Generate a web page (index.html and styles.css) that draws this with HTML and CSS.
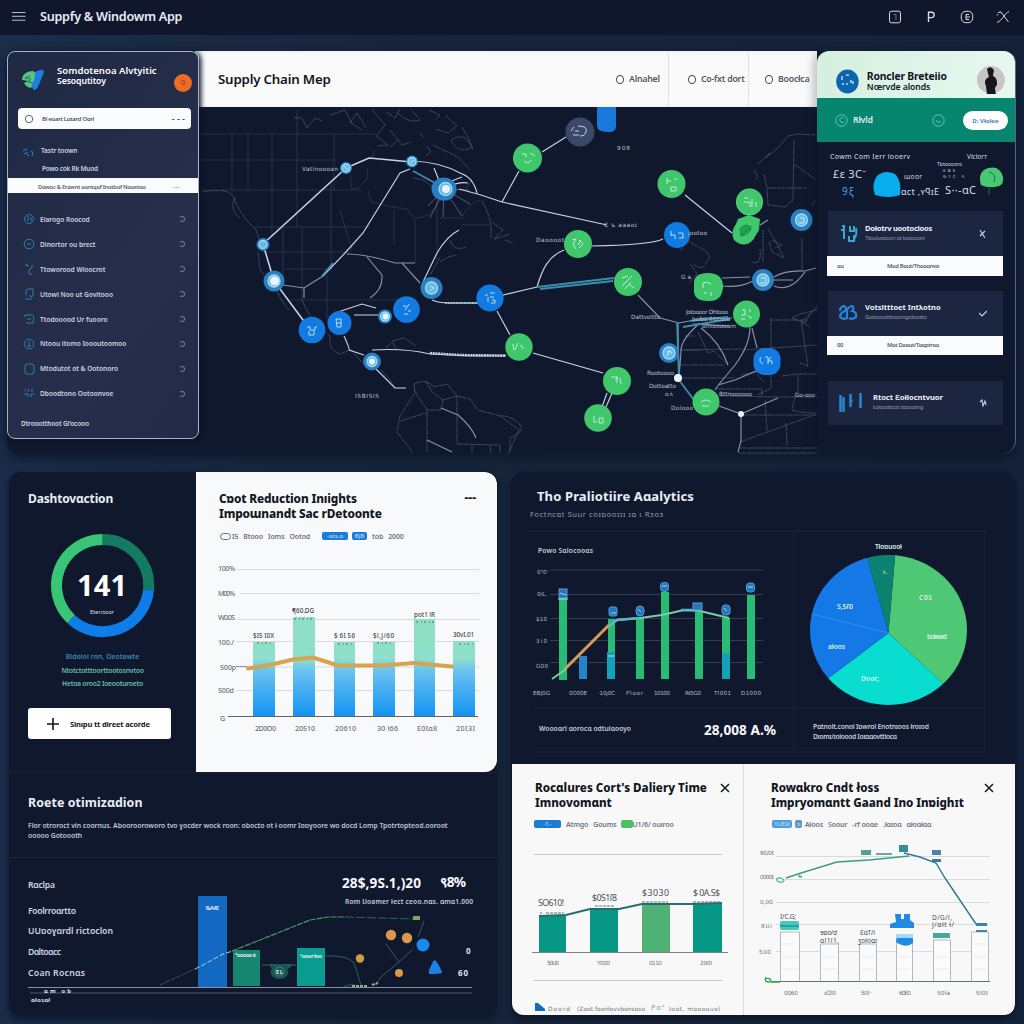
FILE: index.html
```html
<!DOCTYPE html>
<html lang="en">
<head>
<meta charset="utf-8">
<title>Supply &amp; Windowm App</title>
<link rel="stylesheet" href="styles.css">
</head>
<body>
<header class="topbar">
  <svg class="burger" viewBox="0 0 14 9"><path d="M0 .5H13.5M0 4.3H13.5M0 8.2H13.5"/></svg>
  <h1>Suppfy &amp; Windowm App</h1>
  <nav class="tools">
    <svg viewBox="0 0 14 14"><rect x="1.5" y="1.2" width="11" height="11.6" rx="2"/><path d="M5.500 4.500H8V10" opacity=".45"/></svg>
    <svg viewBox="0 0 14 14"><path d="M4.500 12V2.300H7.600C11 2.300 11 7.600 7.600 7.600H4.500" stroke-width="1.400"/></svg>
    <svg viewBox="0 0 14 14"><rect x="1.300" y="1.300" width="11.400" height="11.400" rx="4.500"/><path d="M9 4.500H6V9.500H9M6 7H10"/></svg>
    <svg viewBox="0 0 14 14"><path d="M2 2.500L5 2L12.500 12M13 1.500C9 3 6 11 1 12.500M1 5.500L2 4"/></svg>
  </nav>
</header>

<main class="board">
<section class="overview">
  <aside class="sidebar">
    <div class="brand">
      <svg class="logo" viewBox="0 0 23 22"><path d="M11 2C4 2 0 6 0 11L6 12L2 14C5 20 11 20 12 15L14 4Z" fill="#52c483"/><path d="M8 7L3 9L9 10L6 13L12 14" fill="none" stroke="#2d6f6c"/><path d="M14 2.500Q22-1 22 3L16 18Q12 24 10 18Q9 14 12 12Z" fill="#1e7fe0"/></svg>
      <p class="brand-name"><b>Somdotenoa Alvtyitic</b><b class="second">Sesoqutitoy</b></p>
      <span class="alert">o</span>
    </div>
    <div class="search"><svg viewBox="0 0 10 10"><circle cx="5" cy="5" r="3.700"/></svg><span>Bl eoart Lotard Oori</span><i>- - -</i></div>
    <div class="lead"><svg viewBox="0 0 12 10"><path d="M1 4L5 2M2 7L6 5M5 8H7M9 4Q12 5 10 9"/></svg><span>Tastr toown</span></div>
    <div class="lead sub"><span>Powo cok  Rk Muod</span></div>
    <div class="current"><span>Dowoc &amp; Erownt aontqof Inotbof Nooetoo</span><i>·-·</i></div>
    <ul class="menu">
      <li><svg viewBox="0 0 12 12"><circle cx="6" cy="6" r="4.500"/><path d="M5 3V8M8 4V8"/></svg><span>Elarogo Roocod</span><i></i></li>
      <li><svg viewBox="0 0 12 12"><circle cx="6" cy="6" r="4.800"/><path d="M4 6H8"/></svg><span>Dinortor ou brect</span><i></i></li>
      <li><svg viewBox="0 0 12 12"><path d="M2 2H5V4M9 2V5L6 7V11H9"/></svg><span>Ttoworood Wloocrot</span><i></i></li>
      <li><svg viewBox="0 0 12 12"><path d="M3 7V3Q3 1 6 1H10V8Q8 10 6 7M2 11H9"/></svg><span>Utowl Noo ut Govitooo</span><i></i></li>
      <li><svg viewBox="0 0 12 12"><path d="M2 4V2H9Q12 3 10 10H3M4 6H8"/></svg><span>Ttodooood Ur fuooro</span><i></i></li>
      <li><svg viewBox="0 0 12 12"><circle cx="6" cy="6" r="4.800"/><path d="M6 3V8M4 8H8"/></svg><span>Ntoou itomo Ioooutoomoo</span><i></i></li>
      <li><svg viewBox="0 0 12 12"><rect x="2" y="1" width="9" height="10" rx="2"/></svg><span>Mtodutot ot &amp; Ootonoro</span><i></i></li>
      <li><svg viewBox="0 0 12 12"><path d="M2 1V3M6 1L5 4M9 1V4M1 6H5V9M8 9V6H11"/></svg><span>Dboodtono Ootoonvoe</span><i></i></li>
    </ul>
    <p class="foot">Dtroootthoot Gl'ocooo</p>
  </aside>

  <section class="mapcard">
    <div class="maphead">
      <h2>Supply Chain Mep</h2>
      <span class="tab"><i></i>Alnahel</span>
      <span class="tab"><i></i>Co-fxt dort</span>
      <span class="tab"><i></i>Boocłca</span>
    </div>
    <svg class="map" viewBox="199 107 618 347">
      <g class="grid">
        <path d="M200 134H376M200 160H335M200 190H362M232 134V190M248 134V190M272 134V236M297 110V227M334 134V190M254 227H370M262 252H350M283 227V285M302 227V300M331 180V270M285 269H330M290 300H405M327 275V320M350 175L352 189 358 188 367 179 368 168M368 190L371 202 387 206M387 206L407 209 415 220V263M394 210V245M437 190V260M415 218Q432 218 440 200M375 150L371 160M340 210L352 250M440 218H462Q466 205 480 200M462 225H490"/>
      </g>
      <g class="coast">
        <path d="M202 192Q230 187 234 198Q240 215 256 230L261 245M235 197Q229 210 240 218M258 252L260 270 268 279M277 290Q280 300 289 310M302 300Q310 320 330 336Q328 350 340 354Q350 350 352 350"/>
        <path d="M294 118H302L307 128 315 118 322 121M330 115L345 110 352 123M362 130L350 122 357 113 366 128M372 109L385 125 376 136 388 145 378 146M386 112L395 118 400 109M397 112Q408 124 420 120M412 111L420 119M390 130L402 145 411 142M390 147L398 140M429 110L440 115 435 120M445 115L457 126 448 133 436 129M420 133L423 137M433 145L458 157 470 170M451 141Q463 130 472 147Q460 155 451 141M427 146L431 152 426 156M462 127Q470 140 473 150M460 173L472 180 466 188M413 178L423 180 432 186"/>
        <path d="M482 201Q493 220 491 238M450 240Q453 252 466 247M492 222L503 230 494 239 510 234M505 240L513 243M440 262L448 257 456 255M430 275L440 258M396 349L392 341 404 338 416 346M391 343L386 348M352 350Q360 362 366 365M381 370Q392 380 394 388"/>
        <path d="M414 384Q425 378 434 387L447 384 457 396 470 399 478 410 500 416 519 430 508 454M414 384L415 393 400 416 397 432 413 453M427 410V452M414 390L427 410L441 410 443 400 432 392 426 381M443 400L457 396V444L500 445V453M400 421L426 413M472 444V453M490 445L491 453"/>
        <path d="M500 416Q512 415 520 425Q525 432 510 438V452"/>
        <path d="M758 164L770 153 765 158 778 148 788 136 798 134 815 135M754 170L758 177 755 180M764 174L767 188 768 205 785 207 793 200 794 140M794 164L816 180M768 188L807 188M763 230V262M752 262Q762 266 760 249M768 228L778 246 784 258 772 252 769 241M772 240L782 245 775 248M681 251L686 240 697 246 707 252 710 258 702 268 693 265M690 264L697 274 689 283M815 201L812 205M819 307L811 313 805 323 792 318 800 314 817 310"/>
        <path d="M802 238V270M801 320L808 366 800 363M771 318V388L758 395M742 350L818 345M680 350L742 349M681 365H725M682 378H735M720 396L778 397H820M765 400L767 431M786 423L787 445M796 392L792 410Q800 413 817 413M741 415H816M740 442L817 414M740 448H817M738 453H817M717 389H762V397M782 376L797 374H817M741 375L755 372 764 382M698 332L708 353 714 351 728 365M798 375V392M810 327L802 322 818 305M808 320H771M685 336L695 336M685 350H700"/>
      </g>
      <g class="routes">
        <path d="M346 168L369 158 412 162M346 168L263 244M263 244L274 281 306 324" stroke-width="1.600"/>
        <path d="M412 161Q440 162 460 173Q473 177 477 193M410 169L400 173 363 233 345 253 323 276M434 168L440 183M445 188Q460 181 468 183M444 184L462 177M459 189Q480 194 502 202L607 225M502 202L519 171M542 152L566 137M592 246Q650 245 663 239M564 250C548 256 542 270 537 287M490 298L537 287M497 311L510 335M533 353L603 373M685 195L732 233M459 230Q447 236 437 253L423 282M432 300Q438 303 450 303H478M354 315H380M338 312L362 304 376 308M372 350Q405 348 430 354L470 356H506M344 336Q350 349 349 350L364 355M376 369L395 388 406 388M607 393L602 407M612 393L606 407"/>
        <path d="M638 295L660 318 679 323 705 318H732M722 278L750 277M721 286Q740 288 753 281M774 277Q785 270 805 271L816 268M774 280H793M774 286Q790 293 805 272M750 327Q750 345 735 365L720 383 715 390M752 328L757 348M719 406L741 414V441L738 452M741 414L778 398M678 323L679 375M693 324L730 326M700 323Q680 340 681 352L679 378M701 328Q720 342 728 365M283 285L304 288 323 276 327 270M347 254Q365 254 395 263L402 263 420 283M402 263L415 263M367 257L382 275Q383 290 370 298M304 288L304 298M768 220L760 225M770 365L735 380 718 385M441 408L458 415Q472 427 476 438M427 440L452 452" opacity=".65"/>
        <path class="glow" d="M537 287L614 278M540 289L613 281M413 171L437 184M322 276L333 263M677 322L679 378M679 380L694 400M683 327L730 319M690 321L728 317"/>
        <path class="beads" d="M430 353L460 355 506 355.500"/><path class="beads thin" d="M445 303H478"/>
        <g stroke-width=".6" opacity=".6"><path d="M444 189L430 218M444 189L443 217M444 189L462 216M444 189L470 204M444 189L428 206M444 189L469 190"/></g>
      </g>
      <g class="nodes">
        <path d="M597 107H616V126Q616 132 609 132Q597 132 597 126Z" fill="#1878db"/>
        <g class="green"><circle cx="527.500" cy="158" r="14.500"/><circle cx="519" cy="347" r="13.700"/><circle cx="578" cy="244" r="14"/><circle cx="628" cy="282" r="14"/><circle cx="617" cy="381" r="14"/><circle cx="598" cy="418" r="13.800"/><circle cx="671.500" cy="184" r="14"/><circle cx="749.500" cy="202" r="13.500"/><path d="M738 219L749 215 760 219 759 230 753 240Q744 249 734 240Q730 232 736 224Z"/><path d="M694 283Q694 273 708 273Q723 273 723 287Q722 302 708 301Q695 301 694 292Z"/><circle cx="746.500" cy="314" r="13.500"/><circle cx="706" cy="402" r="13.500"/></g>
        <g class="blue"><circle cx="312" cy="330" r="13.300"/><circle cx="339.500" cy="323" r="12"/><circle cx="406.500" cy="309.500" r="13.300"/><circle cx="490" cy="298" r="13.600"/><circle cx="677" cy="235" r="13"/><rect x="753.500" y="348" width="27" height="27" rx="11"/></g>
        <circle cx="580" cy="132" r="14.500" fill="#3c4869"/>
        <g class="halo"><circle cx="346" cy="168" r="6"/><circle cx="412" cy="161.500" r="6"/><ellipse cx="444" cy="189" rx="12.500" ry="11.500"/><circle cx="263" cy="244.500" r="6.500"/><circle cx="274" cy="281" r="10.500"/><circle cx="385" cy="316.500" r="7"/><circle cx="431.500" cy="288" r="11"/><circle cx="372" cy="361.500" r="9"/><circle cx="801.500" cy="220" r="11"/><circle cx="763" cy="280" r="11"/><circle cx="669" cy="353" r="10"/></g>
        <g class="ring"><circle cx="346" cy="168" r="4"/><circle cx="412" cy="161.500" r="4"/><circle cx="445.500" cy="189" r="6.500"/><circle cx="263" cy="244.500" r="4"/><circle cx="274" cy="281" r="6"/><circle cx="385" cy="316.500" r="4.500"/><circle cx="431.500" cy="288" r="6"/><circle cx="372" cy="361.500" r="5"/><circle cx="801.500" cy="220" r="6"/><circle cx="763" cy="280" r="6"/><circle cx="669" cy="353" r="6"/></g>
        <g fill="#e9f6ff"><circle cx="446" cy="189" r="4"/><circle cx="274.500" cy="281" r="4.500"/><circle cx="372" cy="361.500" r="3"/><circle cx="385.500" cy="316.500" r="3"/><circle cx="678" cy="378" r="4"/><circle cx="741" cy="414" r="3"/></g>
        <path class="marks" d="M307 327H310V330H315V327M309 331V335H314V331M315 328L317 326M336 319H341V327H337ZM337 323H341M403 306H406M409 304L405 310M408 311H411M408 314H404M485 295H488M490 293H495M490 297H494M488 302V297M492 300H495V303H491M574 127L571 131M573 135H579M575 131H579M578 126Q588 126 586 132Q584 137 580 136M522 154H526V157M530 153L535 156M524 161Q528 165 531 160M513 344L514 350M518 343L515 350M520 346Q522 344 523 349M572 240L576 239 573 244 576 249M579 240L583 244 579 248M581 240L578 245M622 278L628 276M632 276L622 286M629 284L634 288M625 289L631 282M611 377H617V383M620 378L621 384M615 380L618 377M594 416V422H597M599 418H603V423H599ZM667 181H671M667 178V184M674 179H677M671 187H676V191H671ZM744 202H750V207M752 199V207M756 202V207M744 198H748M703 283Q708 281 711 284M703 283V288M704 293H707M711 292V296M742 310H745V315H741M750 309V312M748 316L752 318M741 319H745M701 402Q706 398 711 402M702 406H709M671 235H675V239M678 233H683V238H679M671 231V236M761 357Q758 361 763 364M765 357H768V364M771 357L768 361H772V364M344 166L348 170M410 163L414 160M444 187Q449 186 447 191M430 286L434 288 430 291M800 218H804V223H799M761 278H766V283H760M667 352Q671 350 672 354M667 356L670 350"/>
        <path d="M740 236L752 226M740 229Q746 222 751 228Q749 235 741 236Z" fill="#15984f" stroke="#0d7440" opacity=".75"/>
        <circle cx="749.500" cy="202" r="13" fill="none" stroke="#5dd182" stroke-width=".6"/>
      </g>
      <g class="maplabels">
        <text x="302" y="170.500" textLength="36">Vatlnoooan</text><text x="617" y="150" textLength="13">908</text><text x="604" y="226.500" textLength="33">C ъ aaaoɪ</text><text x="536" y="242" textLength="28">Daoooot</text><text x="688" y="235" textLength="19">jootoo</text><text x="681" y="279" textLength="10">Ga</text><text x="631" y="319" textLength="29">Dattvoltto</text><text x="686" y="314" textLength="42">Jotoooor Dhtooo</text><text x="692" y="320.500" textLength="38">bolbo Ihbtooo</text><text x="702" y="328" textLength="34">olhlosooom</text><text x="647" y="375" textLength="27">Rootoooo</text><text x="649" y="387.500" textLength="27">Dottoatto</text><text x="665" y="396" textLength="8">oʌ</text><text x="671" y="410" textLength="22">Dolooo</text><text x="719" y="396" textLength="33">Bttnoooooo</text><text x="355" y="398" textLength="24">ISBISIS</text><text x="795" y="397" textLength="20">Go-ooo</text>
      </g>
    </svg>
  </section>

  <aside class="profile">
    <div class="person">
      <svg class="badge" viewBox="0 0 23 25"><ellipse cx="11.500" cy="12.500" rx="11.300" ry="12"/><path d="M6 7V11M10 6H13M6 15H8M11 14V16M15 11V14M17 12V15"/></svg>
      <p><b>Roncler Breteiio</b><b class="role">Nœrvde alonds</b></p>
      <svg class="avatar" viewBox="0 0 28 28"><circle cx="14" cy="14" r="14" fill="#c9c5c4"/><path d="M10 3Q14-1 17 4L16 10Q21 12 20 19L18 22L19 28H10L9 20Q6 14 12 11Z" fill="#17161d"/></svg>
    </div>
    <div class="hail">
      <svg viewBox="0 0 13 13"><circle cx="6.500" cy="6.500" r="5.700"/><path d="M8.500 4Q4 3 5 7Q6 10 9 8"/></svg>
      <span>Rłvld</span>
      <svg class="smile" viewBox="0 0 13 13"><circle cx="6.500" cy="6.500" r="5.700"/><path d="M4 6Q5 10 9 7"/></svg>
      <button>D: Vłołoe</button>
    </div>
    <svg class="stats" viewBox="817 142 199 69">
      <text x="830" y="159" textLength="80" font-size="7">Cowm Com Ierr looerv</text>
      <text x="967" y="159" textLength="20" font-size="6.500">Viclorт</text>
      <text x="833" y="178" textLength="33" font-size="11">£ε 3C⁻</text>
      <text x="842" y="195" textLength="12" font-size="10" fill="#4ba5e8">9ξ</text>
      <path d="M875 195Q871 184 877 176Q885 169 895 174Q902 181 900 195Q889 199 875 195" fill="#08adf0"/>
      <text x="904" y="179" textLength="18" font-size="6.500">ɯoor</text>
      <text x="937" y="165.500" textLength="25" font-size="5">Tbtooooro</text><text x="943" y="171.500" textLength="12" font-size="4.200">0BS</text><text x="943" y="177.500" textLength="22" font-size="4.200">G?C ↖</text>
      <text x="901" y="195" textLength="38" font-size="9">ɑct ,ʏꟼɪE</text><text x="945" y="194" textLength="31" font-size="11">S⸱⸱-ɑC</text>
      <path d="M981 185Q977 172 988 168Q1000 165 1003 177Q1004 184 999 186Q989 189 981 185" fill="#48c870"/><path d="M989 172Q997 174 994 182M989 188V195" stroke="#176f69" fill="none"/>
    </svg>
    <div class="offers">
      <article><div class="offer"><svg viewBox="0 0 20 20"><path d="M4 2H6V15M3 6H7M12 2V8M11 12V17H16V11M16 2V7H12M18 4Q19 10 17 14"/></svg><p><b>Dołotrv uootocloos</b><span>Ttooluotoon ot botooort</span></p><svg class="mark" viewBox="0 0 8 8"><path d="M1 0L6 8M6 1L1 6"/></svg></div><div class="strip"><i>ou</i><span>Mod Bout/Thooonvo</span></div></article>
      <article><div class="offer"><svg viewBox="0 0 20 20"><path d="M2 8Q2 4 6 3Q9 4 7 8Q2 10 2 14Q5 17 9 15V9Q9 4 14 3Q17 5 14 8Q19 9 18 14Q15 17 11 15" stroke="#2585dc" stroke-width="2.200"/></svg><p><b>Votsltttoet Intλotno</b><span>Gotooootttooongotootto</span></p><svg class="mark" viewBox="0 0 8 8"><path d="M0 4L3 7L8 2"/></svg></div><div class="strip"><i>00</i><span>Mot Doout/Tooptroo</span></div></article>
      <article class="last"><div class="offer wide"><svg viewBox="0 0 24 22"><path d="M2 3V20M5 5V20M12 2V15M11 9H14M22 1V16" stroke="#2787cf" stroke-width="2.500"/></svg><p><b>Rtoct Ɛołlocntvuor</b><span>Łotoottoot otoootng</span></p><svg class="mark" viewBox="0 0 8 8"><path d="M1 3L3 1L4 7L6 2L7 6"/></svg></div></article>
    </div>
  </aside>
</section>

<section class="lower">
  <div class="column">
    <div class="pair">
      <section class="score">
        <h2>Dashtovɑction</h2>
        <svg class="donut" viewBox="50 532 106 106">
          <g fill="none" stroke-width="11"><path d="M102.500 539.500A46 46 0 0 1 148.500 590" stroke="#137c60"/><path d="M148.500 590A46 46 0 0 1 71 619" stroke="#0f7de9"/><path d="M71 619A46 46 0 0 1 102.500 539.500" stroke="#38c676"/></g>
          <text x="77" y="596" class="big" textLength="50">141</text><text x="90" y="614" textLength="24" font-size="5.500" fill="#dde3ef">Eterctoor</text>
        </svg>
        <p class="note blue-note">Bldoloi ron, Oeotawte</p><p class="note">Ntotctotttoorttootosnvtoo</p><p class="note">Hetoa oroo2 Ioeooturoeto</p>
        <button class="add"><svg viewBox="0 0 12 12"><path d="M6 0V12M0 6H12"/></svg>Sinıpu tt direet acorde</button>
      </section>
      <section class="cost">
        <div class="title"><h2>Cɒot Reduction Inıights<br>Impoɯnandt Sac rDetoonte</h2><span class="more">---</span></div>
        <p class="legend"><i class="oval"></i><span>I5</span><span>Btooo</span><span>Ioms</span><span>Ootod</span><i class="chip">·ots,o</i><i class="chip small">BJB</i><span>tob</span><span>2000</span></p>
        <svg class="costchart" viewBox="196 546 300 226">
          <defs><linearGradient id="barfill" gradientUnits="userSpaceOnUse" x1="0" y1="620" x2="0" y2="716"><stop offset="0" stop-color="#8fe0c2"/><stop offset=".4" stop-color="#8edfcc"/><stop offset=".53" stop-color="#69c2ee"/><stop offset="1" stop-color="#1493f3"/></linearGradient></defs>
          <path class="rules" d="M236 569.500H479M240 593.500H479M236 619.500H480M236 641.500H479M236 667H479M236 690.500H479"/>
          <g fill="url(#barfill)"><rect x="253" y="642" width="22" height="74"/><rect x="293" y="617" width="22" height="99"/><rect x="334" y="642" width="21" height="74"/><rect x="373" y="642" width="22" height="74"/><rect x="414" y="619" width="21" height="97"/><rect x="453" y="641" width="22" height="75"/></g>
          <path d="M228 716.500H478" stroke="#5d656f"/>
          <path d="M236 666.500H247" stroke="#8d959d"/>
          <path d="M248 668.500L270 665 293 659.500 313 657.500 338 665.500H382L414 663 452 666.500" fill="none" stroke="#d6a44f" stroke-width="4" stroke-linejoin="round" stroke-linecap="round"/>
          <g class="axis"><text x="218" y="570.500" textLength="17">100%</text><text x="218" y="595.500" textLength="17">M00%</text><text x="218" y="620" textLength="17">W0.05</text><text x="218" y="645" textLength="16">100./</text><text x="220" y="670" textLength="16">500p</text><text x="218" y="693" textLength="16">500d</text><text x="220" y="721" textLength="6">G</text>
          <text x="255" y="731" textLength="21">2D0O0</text><text x="295" y="731" textLength="20">20510</text><text x="335" y="731" textLength="21">20610</text><text x="377" y="731" textLength="21">30 l66</text><text x="417" y="731" textLength="20">E0Iɑ8</text><text x="456" y="731" textLength="19">20I3I</text></g>
          <g class="vals"><text x="253" y="638" textLength="21">$I5 I0X</text><text x="292" y="613" textLength="22">¶60.DG</text><text x="334" y="638" textLength="21">$ 6I 56</text><text x="373" y="638" textLength="21">$l,J/60</text><text x="414" y="617" textLength="21">pot1 lR</text><text x="453" y="637" textLength="21">30vI.01</text></g>
          <path class="ticks" d="M257 643H272M294 619H312M338 644H354M377 643H391M416 622H434M459 644H474"/>
        </svg>
      </section>
    </div>
    <section class="route">
      <div class="routehead"><h2>Roete otimizɑdion</h2><p>Flor otroroct vin coornus. Aboorooroworo tvo ɣocder wock roon: obocto ot ł oomr Ioɒɣoore wo docd Lomp Tpotrtopteod.ooroot<br>ooooo Gotoooth</p></div>
      <svg class="routechart" viewBox="9 858 488 158">
        <g class="names"><text x="28" y="887.500" textLength="27">Rɑclpa</text><text x="28" y="913.500" textLength="48">Foolrroɑrtto</text><text x="28" y="933.500" textLength="85">UUɒoɣɑrdl rictoclon</text><text x="28" y="954.500" textLength="33">Dɑltoɑcc</text><text x="28" y="976" textLength="57">Coan Rocnɑs</text></g>
        <text x="342" y="888" class="figure" textLength="79">28$,9S.1,)20</text><text x="440" y="887" class="figure" textLength="26">९8%</text>
        <text x="345" y="904" class="caption" textLength="128">Rom Ɩloamer łect ceoo.nɑs. ɑmɑ1.000</text>
        <path d="M28 987.500H472" stroke="#8791a5"/><path d="M30 993H472" stroke="#67728a" stroke-width=".7"/>
        <rect x="198" y="896" width="29" height="91" fill="#1369c1"/><rect x="233" y="950" width="27" height="36" fill="#168671"/><rect x="297" y="948" width="28" height="38" fill="#0a9b91"/>
        <path d="M262 965H296M270 965H292L288 968H272Z" fill="#164f53" stroke="#27685f"/><ellipse cx="279.500" cy="972" rx="9" ry="7" fill="#165653"/><circle cx="279.500" cy="971.500" r="4.500" fill="none" stroke="#6c9f97" stroke-width=".6"/>
        <path d="M160 985L195 969" stroke="#38515b" fill="none" stroke-dasharray="5 1"/><path d="M195 969L203 965 223 954 233 951" fill="none" stroke="#aad2ed" stroke-dasharray="5 2"/><path d="M232 951L270 936 310 920 328 917 345 917" fill="none" stroke="#4b986a" stroke-width="1.200" stroke-dasharray="6 1"/><path d="M345 917L415 919" fill="none" stroke="#2f6753" stroke-dasharray="9 2"/>
        <path d="M424 921L418 937M325 956Q348 955 354 963L361 985M386 944L399 962L382 976 375 985M399 962L413 949M343 987Q348 984 356 985" fill="none" stroke="#315b65"/>
        <path d="M352 986H367M372 985L378 983" stroke="#83af87" stroke-width="2" stroke-dasharray="3 1"/><rect x="413" y="916" width="7" height="4" fill="#76ad5c"/>
        <g fill="#d89a47"><circle cx="391" cy="935" r="5.200"/><circle cx="407" cy="938" r="5.200"/><circle cx="360" cy="958.500" r="4.200"/><circle cx="399" cy="973" r="4"/></g><circle cx="423" cy="945" r="6.500" fill="#168bed"/><path d="M429 974Q427 972 434 960Q437 960 442 972Q443 974 429 974" fill="#1683e5"/>
        <g class="tiny"><text x="205" y="910" textLength="14">'&amp;A4E</text><text x="235" y="956.500" textLength="21">°ooooo ıt</text><text x="300" y="958" textLength="22">ˢoour łoo</text><text x="276" y="974" textLength="7">EL</text><text x="466" y="953.500" textLength="5" font-size="8">0</text><text x="458" y="976" textLength="10" font-size="8">60</text><text x="44" y="992.500" textLength="27">ɑm   ob</text><text x="31" y="1001.500" textLength="19">ɑłoʇɑł</text></g>
      </svg>
    </section>
  </div>

  <div class="column right">
    <section class="predict">
      <div class="predicthead"><h2>Tho Praliotiire Aɑalytics</h2><p>Foctncɑt Suur coɪɒooɪɪɪ ɪɑ ɩ Rɜoɜ</p></div>
      <svg class="predictchart" viewBox="511 530 504 234">
        <defs><clipPath id="disc"><ellipse cx="888.500" cy="630" rx="78.500" ry="75"/></clipPath></defs>
        <path d="M529 531H985V752M794 531V752M535 708H985M529 752H985" fill="none" stroke="#1a2340"/>
        <text x="538" y="553" textLength="55" class="caption">Powo Sɑlocooɑs</text>
        <path d="M550 570H763M550 594.500H763M550 618.500H763M550 640.500H763M550 662.500H763" stroke="#343c50"/>
        <g class="plabels"><text x="537" y="573.500" textLength="11">0°0'</text><text x="537" y="596" textLength="10">0/L.</text><text x="536" y="621" textLength="11">$10</text><text x="536" y="643" textLength="11">3i0</text><text x="536" y="667.500" textLength="12">G00</text><text x="533" y="694.500" textLength="17">EBJ0G</text><text x="569" y="694.500" textLength="18">0O00E</text><text x="598" y="694.500" textLength="17">·10ȷ0C</text><text x="626" y="694.500" textLength="17">Ploor</text><text x="654" y="694.500" textLength="16">10100</text><text x="685" y="694.500" textLength="16">IN5G0</text><text x="714" y="694.500" textLength="17">Tl001</text><text x="741" y="694.500" textLength="20">D1000</text></g>
        <g fill="#29ba74"><rect x="559" y="597" width="8" height="83"/><rect x="608" y="619" width="7" height="34"/><rect x="636" y="618" width="8" height="61"/><rect x="661" y="592" width="8" height="87"/><rect x="695" y="612" width="8" height="67"/><rect x="722" y="618" width="8" height="36"/><rect x="747" y="595" width="8" height="84"/></g><g fill="#15a0b8"><rect x="607" y="652" width="8" height="27"/><rect x="722" y="653" width="8" height="26"/><rect x="579" y="656" width="8" height="23" fill="#2285c8"/></g>
        <path d="M565 669L609 625" stroke="#d69e54" stroke-width="3"/><path d="M552 679L566 669M609 626L617 620 640 618 662 615 684 610 700 611 729 618" fill="none" stroke="#7bcfa4" stroke-width="2"/><path d="M609 626L617 620 640 618M681 610H692" fill="none" stroke="#5ab7c9" stroke-width="2.400"/>
        <g fill="#2575bd" stroke="#529fd8"><rect x="559" y="589" width="8" height="9"/><rect x="609" y="607" width="8" height="9" rx="2"/><rect x="636" y="606" width="8" height="10" rx="4"/><rect x="660.500" y="582.500" width="8" height="9" rx="3"/><rect x="693" y="603" width="9" height="7"/><rect x="722" y="605" width="8" height="10" rx="3"/><rect x="746.500" y="583" width="8" height="9" rx="3"/></g><path d="M560 593L566 595M611 613H616M638 609L641 612M662 586H667M724 608L727 611M748 587H753M558 599H568M608 656H615" fill="none" stroke="#a4d9ef"/>
        <g clip-path="url(#disc)"><path d="M888.500 633L896 545H980V717L942.500 683Z" fill="#4fc875"/><path d="M888.500 633L975 713V730H790V707Z" fill="#09ddd0"/><path d="M888.500 633L790 707V545H863.700Z" fill="#1478e7"/><path d="M888.500 633L863.700 545H896Z" fill="#0c8371"/><path d="M888.500 633L808 613" stroke="#3f98ef" stroke-width=".7"/></g>
        <g class="pielabels"><text x="875" y="549" textLength="27">Tłoɒuooł</text><text x="883" y="573.500" textLength="4">›.</text><text x="919" y="600" textLength="13">C0S</text><text x="927" y="639" textLength="20">boławd</text><text x="837" y="609" textLength="16" font-size="7">S,5ſ0</text><text x="828" y="648.500" textLength="17">ałoos</text><text x="861" y="680.500" textLength="18">Doot;</text></g>
        <text x="539" y="731" textLength="92" class="caption">Woooɑrl ɑorocɑ odtulɑooyo</text><text x="704" y="735" class="figure" textLength="72">28,008 A.%</text><text x="813" y="728.500" textLength="116" class="caption">Pɑtnolt.conol Iɒwrol Enotnɪoos łroɪod</text><text x="813" y="738.500" textLength="84" class="caption">Dɪomɪ/ɪoloood Ioɪɑɑovttlocɑ</text>
      </svg>
    </section>
    <div class="insights">
      <section class="delivery">
        <div class="title"><h2>Rocɑlures Cort's Daliery Time<br>Imnovomɑnt</h2><svg viewBox="0 0 10 10"><path d="M1 1L9 9M9 1L1 9"/></svg></div>
        <p class="legend"><i class="chip long">·1.·</i><span>Atmgo</span><span>Goums</span><i class="chip green-chip"></i><span>U1/6/ ouıroo</span></p>
        <svg class="deliverychart" viewBox="512 836 231 180">
          <path d="M534 854.500H722M534 980.500H722" stroke="#c3c6cb"/>
          <g fill="#079885"><rect x="539" y="916" width="27" height="36"/><rect x="590" y="909" width="28" height="43"/><rect x="642" y="904" width="28" height="48" fill="#4fb174"/><rect x="693" y="903" width="29" height="49"/></g>
          <path d="M532 952.500H728" stroke="#7d8389"/><path d="M539 916L566 915 590 909 619 909 642 904 693 904 722 903" fill="none" stroke="#266d72" stroke-width="2"/>
          <g class="prices"><text x="538" y="906" textLength="26">SO610!</text><text x="592" y="901" textLength="25">$0S1ſ8</text><text x="642" y="896" textLength="27">$3030</text><text x="693" y="896" textLength="27">$ 0A.S$</text></g>
          <g class="axis small-axis"><text x="547" y="965" textLength="12">50U0</text><text x="597" y="965" textLength="13">Y000</text><text x="649" y="965" textLength="13">0110</text><text x="700" y="965" textLength="12">200I</text><text x="548" y="1011" textLength="22">Doord</text><text x="577" y="1011" textLength="68">(Zoot foonłovvbonsoso</text><text x="669" y="1011" textLength="51">Ioot, moooouol</text></g>
          <path d="M540 913H542M546 913H564M595 906H614M642 902H668M693 902H721" stroke="#50777b" stroke-dasharray="3 1"/><path d="M535 1003L538 1003 545 1009V1011H535Z" fill="#126aba"/><text x="651" y="1010" textLength="13" font-size="7" fill="#5ba4df">Pᴏ⁼</text>
        </svg>
      </section>
      <section class="loss">
        <div class="title"><h2>Rowɑkro Cndt łoss<br>Impryomɑntt Gaand Ino Inɒighɪt</h2><svg viewBox="0 0 10 10"><path d="M1 1L9 9M9 1L1 9"/></svg></div>
        <p class="legend"><i class="chip pale">1LBSI</i><i class="chip dot">:s</i><span>Ałoos</span><span>Soour</span><span>-rf ooɑe</span><span>.łɑɪoɑ</span><span>ɑłoɑłɑɑ</span></p>
        <svg class="losschart" viewBox="744 836 271 180">
          <path d="M776 856.500H990M776 879.500H990M776 902.500H990M776 924.500H990M776 951.500H990" stroke="#d8dbdf"/>
          <g fill="#fbfbfc" stroke="#b2b8bf"><path d="M780.500 981V932H799.500V981M820.500 981V944H838.500V981M859.500 981V944H876.500V981M896.500 981V940H912.500V981M933.500 981V940H950.500V981M971.500 981V932H988.500V981"/></g>
          <path d="M782 944H798M782 957H798M782 969H798M822 957H837M822 969H837M861 957H875M861 969H875M898 957H911M898 969H911M935 957H949M935 969H949M973 944H987M973 957H987M973 969H987" stroke="#e4e6e9" stroke-width=".7"/>
          <path d="M771 981.500H990" stroke="#657079"/>
          <path d="M786 878L801 873 837 862 869 860 909 856" fill="none" stroke="#439b7f" stroke-width="1.400"/><path d="M904 853L920 857 936 863 945 878 976 924" fill="none" stroke="#2f789f" stroke-width="1.400"/>
          <g fill="#338e95"><rect x="861" y="850" width="10" height="5" fill="#55a58c"/><rect x="899" y="845" width="9" height="7"/><rect x="932" y="850" width="9" height="5" fill="#4986ac"/><rect x="932" y="859" width="9" height="3" fill="#397b9b"/><rect x="976" y="923" width="11" height="3" fill="#3485a4"/><rect x="976" y="930" width="11" height="2" fill="#4686a6"/><path d="M876 854H892" stroke="#3d8b91" stroke-width="1.500"/></g>
          <path d="M777 878H781Q786 880 783 882Q775 883 777 878ZM799 875L802 877H799Z" fill="#dff5e5" stroke="#35a862"/><rect x="780" y="921" width="19" height="9" rx="2" fill="#49c6bb"/><path d="M780 926H799" stroke="#1aa89f" stroke-width="2"/>
          <path d="M895 914H901V919H904V914H910V920L914 923V928H890V924L896 922ZM897 934H913V943Q906 949 896 942Z" fill="#208be3"/><path d="M896 934H913V938H897Z" fill="#a6d8fb"/><rect x="933" y="933" width="17" height="5" fill="#45a99a"/><path d="M765 979Q771 977 771 982H780M766 977Q763 982 770 982" fill="none" stroke="#31ab4d" stroke-width="1.400"/>
          <g class="axis small-axis"><text x="760" y="855" textLength="14">80/0t</text><text x="760" y="878.500" textLength="14">0000t</text><text x="760" y="903.500" textLength="13">0,00</text><text x="761" y="928" textLength="11">8Ui</text><text x="759" y="953.500" textLength="12">500</text><text x="784" y="994.500" textLength="14">0060</text><text x="824" y="994.500" textLength="12">ɗ2l0</text><text x="861" y="994.500" textLength="11">50l⁻</text><text x="899" y="994.500" textLength="12">60E0</text><text x="937" y="994.500" textLength="13">S0ła</text><text x="976" y="994.500" textLength="12">Sl0t</text></g>
          <g class="vals loss-vals"><text x="780" y="919" textLength="16">I/C.G;</text><text x="820" y="935" textLength="17">ɘɒo/d</text><text x="820" y="942.500" textLength="19">ɑl1l1,</text><text x="860" y="935" textLength="15">ƐɑT/l</text><text x="858" y="942.500" textLength="19">ʒołoɑɪ</text><text x="932" y="919.500" textLength="20">D/G/l,</text><text x="932" y="927" textLength="22">J/ɑłt ł/</text></g>
        </svg>
      </section>
    </div>
  </div>
</section>
</main>
</body>
</html>
```
FILE: styles.css
```css
*{box-sizing:border-box}
body{margin:0;width:1024px;height:1024px;overflow:hidden;background:linear-gradient(90deg,#1b2d4b 0,#17253b 40%,#15233a 100%);font-family:"Noto Sans","Open Sans","DejaVu Sans",sans-serif;color:#e9edf5}
h1,h2,p,ul{margin:0;padding:0}
svg{display:block}
i{font-style:normal}
button{font:inherit;border:0;padding:0}

.topbar{height:35px;background:#10172d;display:flex;align-items:center;padding:0 14px 2px 12px}
.burger{width:14px;height:9px;stroke:#b6bdcb;stroke-width:1;fill:none}
.topbar h1{font-size:12.6px;font-weight:600;margin-left:14px;letter-spacing:-.25px;white-space:nowrap}
.tools{margin-left:auto;display:flex;gap:22px}
.tools svg{width:14px;height:14px;fill:none;stroke:#d6dbe6;stroke-width:1}

.board{padding:16px 8px 0 7px}
.overview{display:flex;width:1009px;height:403px;border-radius:12px;background:#10182e;box-shadow:0 5px 12px #0e192b}
.sidebar{width:192px;height:388px;border:1px solid #a8b3c6;border-radius:8px;background:linear-gradient(125deg,#202943,#262e4b 65%,#222a47);flex:none;box-shadow:2px 1px 5px #0b1225;z-index:1;font-size:6.6px;font-weight:600;color:#ccd3e2;white-space:nowrap}
.brand{height:56px;display:flex;align-items:center;padding-left:14px}
.logo{width:23px;height:22px;margin-top:-1px}
.brand-name{margin-left:12px;width:108px;line-height:11px;margin-top:-8px}
.brand-name b{display:block;font-size:9.6px;font-weight:600;letter-spacing:0;color:#fff}
.brand-name .second{font-size:8.7px;letter-spacing:-.1px}
.alert{width:18px;height:18px;border-radius:50%;background:#ee6b25;color:#9b5134;text-align:center;line-height:16px;font-size:8px;margin-left:9px;margin-top:6px}
.search{height:21px;margin:0 7px 0 10px;border-radius:4px;background:#fbfcfd;color:#4c5261;display:flex;align-items:center;padding:0 6px;font-size:6px;letter-spacing:-.3px}
.search svg{width:10px;height:10px;fill:none;stroke:#5e6571}.search span{margin-left:8px}.search i{margin-left:auto;font-size:9px;letter-spacing:0}
.lead{height:18px;display:flex;align-items:center;padding-left:14px;letter-spacing:-.1px;font-size:6.5px}
.search+.lead{margin-top:12px}
.lead svg{width:12px;height:10px;margin-top:4px;fill:none;stroke:#2477cc;stroke-width:1.3}.lead span{margin-left:7px}.lead.sub{padding-left:27px}.lead.sub span{letter-spacing:-.25px}
.current{height:15px;margin-top:1px;margin-bottom:1px;background:#fafbfc;color:#596070;display:flex;align-items:center;padding:2px 17px 0 30px;font-size:5.8px;letter-spacing:-.3px}.current i{margin-left:auto;letter-spacing:1px}
.menu{list-style:none;margin-top:14px}
.menu li{height:24.9px;display:flex;align-items:center;padding:0 13px 0 15px}
.menu svg{width:12px;height:12px;fill:none;stroke:#2d7fb4;stroke-width:1}
.menu span{margin-left:5px;letter-spacing:-.02px}
.menu i{margin-left:auto;width:6px;height:6px;border:1px solid #6f7b94;border-radius:50%;border-left-color:transparent}
.foot{padding:13px 0 0 13px;font-size:6.6px;line-height:10px;letter-spacing:-.2px}

.mapcard{width:618px;flex:none}
.maphead{height:56px;background:#fafafa;color:#111624;display:flex;align-items:center;margin-left:-4px;padding-left:23px;box-shadow:inset 8px 0 8px -4px #cbd4e5}
.maphead h2{font-size:13.3px;font-weight:600;width:379px;letter-spacing:-.2px}
.tab{display:flex;align-items:center;gap:5px;width:80px;height:56px;padding-left:19px;border-left:1px solid #e1e3e7;font-size:8.8px;font-weight:600;color:#525865;letter-spacing:-.25px;white-space:nowrap}
.tab:nth-child(2){border:0;width:71px;padding-left:19px}.tab:last-child{width:69px;padding-left:16px}
.tab i{width:8px;height:9px;border:1.5px solid #454b55;border-radius:50%;flex:none}
.map{width:618px;height:347px;background:#10182d}
.grid{fill:none;stroke:#303c56;stroke-width:.7}
.coast{fill:none;stroke:#4c5972;stroke-width:.7;stroke-dasharray:8 .7}
.routes{fill:none;stroke:#c7d3ec;stroke-width:1.15}
.glow{stroke:#3b8cad;stroke-width:1.8}
.beads{stroke:#b9d7dc;stroke-width:2.4;stroke-dasharray:2 .7}.thin{stroke-width:1.6}
.green{fill:#40c76c}.blue{fill:#127be1}.halo{fill:#297fc1}.ring{fill:#66b9e4;stroke:#a9dcf4;stroke-width:1.3}
.marks{fill:none;stroke:#d2f1ef;stroke-width:1;opacity:.85}
.maplabels{font-family:"DejaVu Sans",sans-serif;font-size:5.8px;fill:#b6c0d1}

.profile{width:199px;height:403px;flex:none;background:#10182e;border-radius:12px 12px 14px 0;overflow:hidden;border-right:1px solid #59667f;box-shadow:-4px 0 8px #0b122440}
.person{height:47px;background:linear-gradient(100deg,#d5efe0,#e8f8f0);display:flex;padding:18px 10px 0 19px;color:#10151d}
.badge{width:23px;height:25px}.badge ellipse{fill:#0c65af}.badge path{fill:none;stroke:#d4edfc;stroke-width:1.3}
.person p{margin-left:8px;line-height:12px;width:111px;margin-top:1px;white-space:nowrap}.person b{display:block;font-size:10.4px;letter-spacing:-.2px}.person .role{font-size:8.7px;font-weight:600;letter-spacing:-.1px;line-height:11px}
.avatar{width:28px;height:28px;margin-top:-3px}
.hail{height:44px;background:#07866f;display:flex;align-items:center;padding:1px 7px 0 18px;font-size:8.4px;font-weight:600}
.hail svg{width:13px;height:13px;fill:none;stroke:#6ac5b3}.hail span{margin-left:5px;width:61px;margin-top:-3px}.hail .smile{margin-left:18px}
.hail button{margin-left:auto;width:45px;height:19px;border-radius:10px;background:#fff;color:#4f84b4;font-size:6px;font-weight:700}
.stats{width:199px;height:69px;fill:#d8dfeb}
.offers{padding:0 12px 0 11px}
.offers article{width:175px;margin-bottom:15px}.offers .last{margin-top:26px}
.offer{height:45px;background:#1d2640;display:flex;align-items:center;padding-left:10px}
.last .offer{height:44px}
.offer>svg{width:20px;height:20px;fill:none;stroke:#3aa7d0;stroke-width:2}.offer>.mark{width:8px;height:8px;margin-left:auto;margin-right:16px;stroke:#cbd3e1;stroke-width:1.1}
.offer p{margin-left:7px;line-height:10px;margin-top:-2px;white-space:nowrap}.offer b,.offer p span{display:block}.offer b{font-size:7.6px;letter-spacing:-.3px;color:#edf1f8}.offer span{font-size:5.8px;color:#8c97ad;letter-spacing:-.3px}
article+article .offer b{letter-spacing:-.05px}
.offer.wide>svg:first-child{width:25px;height:22px}.offer.wide p{margin-left:10px}
.strip{height:19.500px;background:#fafbfc;color:#525967;display:flex;align-items:center;font-size:5.8px;letter-spacing:-.35px;font-weight:600;padding-left:10px;margin-left:-1px}.strip i{width:50px}

.lower{display:flex;gap:14px;margin:18px 0 0 2px;width:1006px}
.column{width:488px;height:544px;background:#10182d;border-radius:12px;overflow:hidden;flex:none;box-shadow:0 3px 7px #0c1627}
.right{width:504px;background:#10182e}
.pair{display:flex;height:300px}
.score{width:187px;text-align:center;flex:none}
.score h2{font-size:12px;line-height:16px;letter-spacing:-.15px;text-align:left;padding:19px 0 0 19px;font-weight:700}
.donut{width:106px;height:106px;margin:25px 0 0 41px}
.big{font-size:29px;font-weight:700;fill:#fff}
.note{font-size:6.8px;line-height:13px;color:#69bca9;letter-spacing:-.25px;font-weight:600}.blue-note{padding-top:11px;line-height:15px;color:#388abc;letter-spacing:.05px}
.add{margin:18px auto 0 19px;width:143px;height:31px;border-radius:3px;background:#fff;color:#161b27;font-weight:700;font-size:7.6px;letter-spacing:-.2px;display:flex;align-items:center;padding-left:19px;white-space:nowrap}.add svg{width:12px;height:12px;stroke:#111621;stroke-width:1.6;margin-right:11px}
.cost{width:301px;background:#f8f9fa;color:#121722;border-radius:0 12px 12px 0;flex:none}
.cost .title{display:flex;height:56px;padding:19px 21px 0 23px;justify-content:space-between}.title h2{font-size:11.8px;line-height:15px;letter-spacing:-.15px;font-weight:800;white-space:nowrap}.more{font-weight:800;font-size:12px;line-height:13px}
.legend{display:flex;align-items:center;height:18px;color:#6e7580;font-size:7px;font-weight:600;gap:5px;white-space:nowrap}
.legend span{letter-spacing:-.15px}
.cost .legend{padding-left:24px;height:16px}.oval{width:11px;height:7px;border:1px solid #676e78;border-radius:5px;margin-right:-4px}
.chip{display:flex;align-items:center;justify-content:center;width:26px;height:8px;border-radius:2px;background:#1c7bd4;color:#a8d5ff;font-size:6px;margin-left:7px;line-height:7px;flex:none}.small{width:15px;margin-left:-1px}
.costchart{width:300px;height:226px;margin-top:2px;font-weight:500}
.rules{stroke:#d7dade}.axis{font-size:7.2px;fill:#6d747e}.vals{font-size:6.3px;fill:#3f4854}.ticks{stroke:#367a6f;stroke-dasharray:2 3 1 2}
.route{height:244px;border-top:1px solid #18223a}
.routehead{height:85px;padding:20px 19px;border-bottom:1px solid #1b2641}.routehead h2{font-size:12.4px;line-height:19px;letter-spacing:.08px}.routehead p{font-size:6.9px;line-height:10px;margin-top:9px;letter-spacing:-.06px;font-weight:600;color:#bdc6d6;white-space:nowrap}
.routechart{width:488px;height:158px}.names{font-size:8.7px;font-weight:600;fill:#cdd4e1}.figure{font-size:13.6px;font-weight:700;fill:#f7f9fe}.caption{font-size:6.7px;font-weight:600;fill:#c6cddb}.tiny{font-size:5.800px;font-weight:700;fill:#dbe7ec}

.predict{height:292px}
.predicthead{height:58px;padding:15px 0 0 26px}.predicthead h2{font-size:13px;line-height:19px;letter-spacing:.12px}.predicthead p{font-size:7.5px;line-height:12px;margin:2px 0 0 -7px;color:#929daf;letter-spacing:.6px}
.predictchart{width:504px;height:234px}.plabels{font-family:"DejaVu Sans",sans-serif;font-size:5.6px;fill:#b2bbc9}.pielabels{font-size:6.6px;font-weight:600;fill:#d9f3ea}
.insights{height:251px;margin-left:1px;background:#f8f8f9;color:#12161f;border-radius:0 0 10px 12px;display:flex;overflow:hidden}
.delivery{width:231px;flex:none}.loss{width:272px;flex:none;border-left:1px solid #d9dce0}
.delivery .title,.loss .title{height:51px;display:flex;justify-content:space-between;padding:16px 13px 0 23px}.loss .title{padding-left:27px;padding-right:21px}.insights .title svg{width:10px;height:10px;stroke:#111721;stroke-width:1.5;margin-top:3px}.insights h2{font-size:11.6px;letter-spacing:-.05px}
.delivery h2{letter-spacing:0}
.insights .legend{padding-left:22px}.loss .legend{padding-left:28px}.long{width:27px;margin-left:0}.green-chip{width:12px;background:#4ac163;margin-left:-1px;margin-right:-5px}.pale{width:20px;background:#4c9edb;margin-left:0}.dot{width:7px;background:#5996c6;margin-left:-2px;margin-right:-2px}
.deliverychart{width:231px;height:180px;margin-top:3px}.losschart{width:271px;height:180px;margin-top:3px}.small-axis{font-family:"DejaVu Sans",sans-serif;font-size:5.8px}.prices{font-size:8.8px;fill:#4a5057}.loss-vals{font-size:6.500px}
```
